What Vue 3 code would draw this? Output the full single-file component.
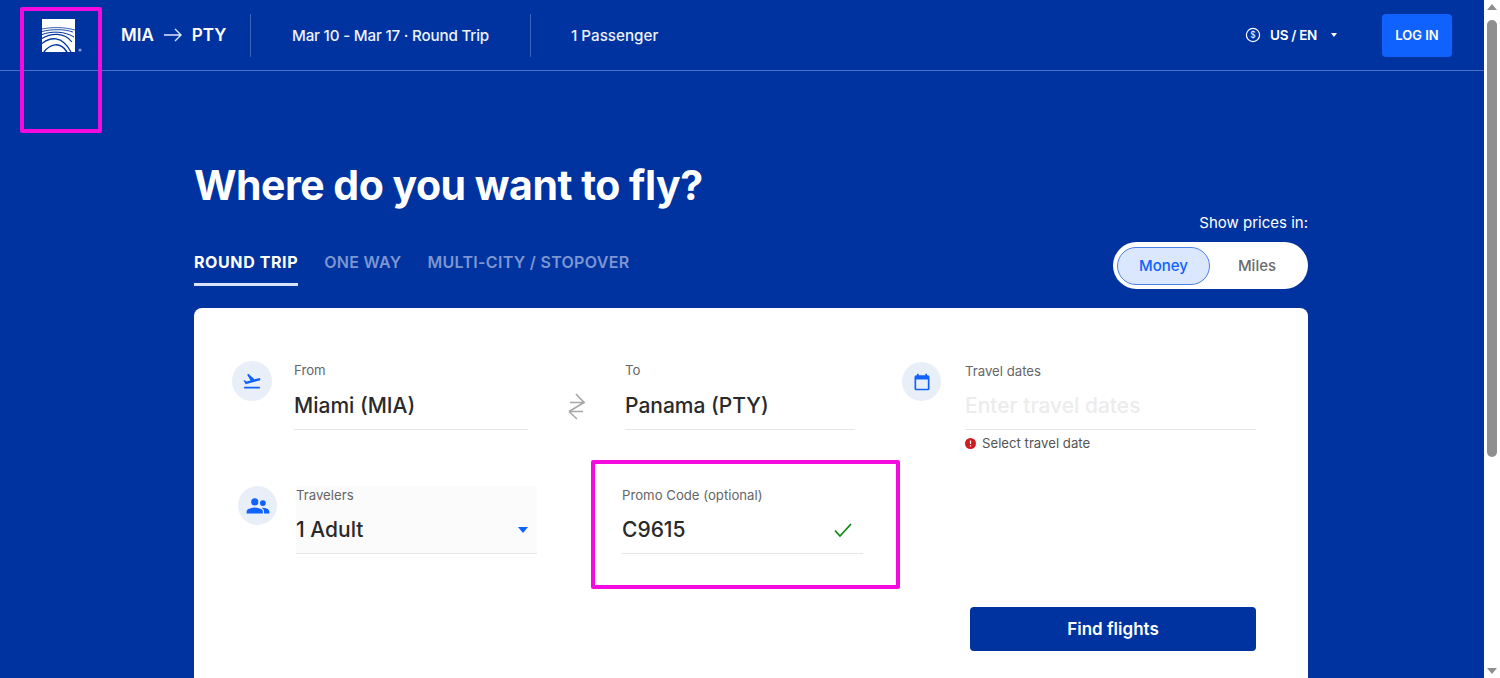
<script setup>
const tabs = [
    {label: 'ROUND TRIP', active: true},
    {label: 'ONE WAY', active: false},
    {label: 'MULTI-CITY / STOPOVER', active: false}
];
</script>

<template>
    <div class="page">
        <div class="main">
            <header class="topbar">
                <div class="logo-cell">
                    <svg class="logo" width="42" height="34" viewBox="0 0 42 34">
                        <rect x="0" y="0" width="33" height="33" fill="#fff"/>
                        <g fill="none" stroke="#0033a0">
                            <path d="M0 10C10 8 22 8 33 11" stroke-width=".8"/>
                            <path d="M0 12.500C10 10 22 10 31 13" stroke-width=".9"/>
                            <path d="M0 15.500C10 12 22 12 32 18" stroke-width="1"/>
                            <path d="M0 19.500C9 14 22 13 30 23" stroke-width="1.200"/>
                            <path d="M0 24.500C8 18 20 16 29 33" stroke-width="1.300"/>
                            <path d="M2 33C8 25 18 22 25 33" stroke-width="1.500"/>
                        </g>
                        <circle cx="38" cy="31" r="1.600" fill="#7f9bd6"/>
                    </svg>
                </div>
                <div class="route">
                    <span>MIA</span>
                    <svg width="18" height="14" viewBox="0 0 18 14" fill="none" stroke="#dfe8fb" stroke-width="1.400">
                        <path d="M0 7H17M11 1l6 6-6 6"/>
                    </svg>
                    <span>PTY</span>
                </div>
                <div class="summary dates">Mar 10 - Mar 17 · Round Trip</div>
                <div class="summary pax">1 Passenger</div>
                <div class="top-right">
                    <svg width="16" height="16" viewBox="0 0 16 16" fill="none" stroke="#fff" stroke-width="1.200">
                        <circle cx="8" cy="8" r="6.600"/>
                        <text x="8" y="11" text-anchor="middle" font-size="8.500" fill="#fff" stroke="none" font-family="Inter, sans-serif">$</text>
                    </svg>
                    <span class="locale">US / EN</span>
                    <span class="caret"></span>
                    <button class="login">LOG IN</button>
                </div>
            </header>

            <section class="content">
                <h1>Where do you want to fly?</h1>
                <div class="tabs-row">
                    <nav class="tabs">
                        <a v-for="tab in tabs" :key="tab.label" class="tab" :class="{active: tab.active}">{{ tab.label }}</a>
                    </nav>
                    <div class="prices">
                        <div class="prices-label">Show prices in:</div>
                        <div class="toggle">
                            <span class="opt on">Money</span>
                            <span class="opt">Miles</span>
                        </div>
                    </div>
                </div>

                <div class="card">
                    <div class="row first">
                        <span class="circle">
                            <svg width="20" height="20" viewBox="0 0 24 24" fill="#0f62fe">
                                <path d="M2.500 19h19v2h-19zM22.070 9.640c-.21-.8-1.040-1.280-1.840-1.060L14.920 10l-6.900-6.430-1.930.51 4.140 7.170-4.970 1.330-1.970-1.540-1.450.39 2.590 4.490c0 0 7.120-1.900 16.570-4.430.81-.23 1.280-1.050 1.070-1.850z"/>
                            </svg>
                        </span>
                        <div class="field from">
                            <label>From</label>
                            <div class="value">Miami (MIA)</div>
                        </div>
                        <div class="swap">
                            <svg width="17" height="27" viewBox="0 0 17 27" fill="none" stroke="#a8a8a8" stroke-width="1.700">
                                <path d="M8 1l8 8.500H2M16 9.500L1 18.500M1 18.500H15M1 18.500L9 26"/>
                            </svg>
                        </div>
                        <div class="field to">
                            <label>To</label>
                            <div class="value">Panama (PTY)</div>
                        </div>
                        <span class="circle cal">
                            <svg width="20" height="20" viewBox="0 0 24 24" fill="#0f62fe">
                                <path d="M19 4h-1V2h-2v2H8V2H6v2H5a2 2 0 0 0-2 2v14a2 2 0 0 0 2 2h14a2 2 0 0 0 2-2V6a2 2 0 0 0-2-2zm0 16H5V9h14v11z"/>
                            </svg>
                        </span>
                        <div class="field dates-field">
                            <label>Travel dates</label>
                            <div class="value placeholder">Enter travel dates</div>
                            <div class="error">
                                <svg width="11" height="11" viewBox="0 0 11 11">
                                    <circle cx="5.500" cy="5.500" r="5.500" fill="#d01c1f"/>
                                    <path d="M5.500 2.500v3.400M5.500 7.200v1.200" stroke="#fff" stroke-width="1.200"/>
                                </svg>
                                <span>Select travel date</span>
                            </div>
                        </div>
                    </div>

                    <div class="row second">
                        <span class="circle">
                            <svg width="26" height="26" viewBox="0 0 24 24" fill="#0f62fe">
                                <path d="M9 11.500a3.300 3.300 0 1 0 0-6.600 3.300 3.300 0 0 0 0 6.600zM16.500 12a2.700 2.700 0 1 0 0-5.400 2.700 2.700 0 0 0 0 5.400zM9 13.300c-2.600 0-7.500 1.200-7.500 3.700v1.900h15V17c0-2.500-4.900-3.700-7.500-3.700zM16.500 13.500c-.3 0-.7 0-1.100.1 1.200.9 2.100 2 2.100 3.400v1.900h5V17.200c0-2.400-3.800-3.700-6-3.700z"/>
                            </svg>
                        </span>
                        <div class="field travelers">
                            <label>Travelers</label>
                            <div class="value">1 Adult<span class="blue-caret"></span></div>
                        </div>
                        <div class="field promo">
                            <label>Promo Code (optional)</label>
                            <div class="value">C9615
                                <svg width="20" height="16" viewBox="0 0 20 16" fill="none" stroke="#0d8a12" stroke-width="1.800">
                                    <path d="M2 8.500l5 5.500L18 2"/>
                                </svg>
                            </div>
                        </div>
                    </div>

                    <div class="actions">
                        <button class="find">Find flights</button>
                    </div>
                </div>
            </section>
        </div>

        <aside class="scrollbar">
            <span class="arrow up"></span>
            <span class="thumb"></span>
            <span class="arrow down"></span>
        </aside>

        <div class="mark mark-logo"></div>
        <div class="mark mark-promo"></div>
    </div>
</template>

<style>
html, body {
    margin: 0;
    overflow: hidden;
}
</style>

<style scoped>
.page {
    position: relative;
    display: flex;
    height: 678px;
    overflow: hidden;
    font-family: Inter, "Liberation Sans", sans-serif;
    color: #fff;
    background: #fff;
}

.main {
    width: 1484px;
    background: #0033a0;
    overflow: hidden;
}

.topbar {
    display: flex;
    align-items: center;
    height: 70px;
    border-bottom: 1px solid #4a70c4;
}

.logo-cell {
    display: flex;
    width: 121px;
    padding: 2px 0 0 42px;
    box-sizing: border-box;
}

.route {
    display: flex;
    align-items: center;
    gap: 10px;
    width: 129px;
    height: 43px;
    font-size: 17px;
    font-weight: 600;
    border-right: 1px solid #3a62bb;
    box-sizing: content-box;
}

.summary {
    display: flex;
    align-items: center;
    height: 43px;
    font-size: 15.200px;
    font-weight: 500;
    color: #eef2fb;
    padding-left: 41px;
    white-space: nowrap;
}

.dates {
    width: 197px;
    padding-right: 41px;
    border-right: 1px solid #3a62bb;
    letter-spacing: -0.2px;
}

.pax {
    padding-left: 40px;
}

.top-right {
    display: flex;
    align-items: center;
    margin-left: auto;
    padding-right: 32px;
}

.locale {
    margin-left: 9px;
    font-size: 13.500px;
    font-weight: 600;
    letter-spacing: -0.3px;
}

.caret {
    width: 0;
    height: 0;
    margin-left: 14px;
    border: 3.500px solid transparent;
    border-top: 4px solid #fff;
    border-bottom: 0;
}

.login {
    width: 70px;
    height: 43px;
    margin-left: 45px;
    border: 0;
    border-radius: 4px;
    background: #0f62fe;
    color: #fff;
    font-family: inherit;
    font-size: 13px;
    font-weight: 600;
}

.content {
    padding-left: 194px;
    width: 1114px;
}

h1 {
    margin: 86px 0 0;
    font-size: 41px;
    line-height: 56px;
    font-weight: 700;
    letter-spacing: -0.5px;
}

.tabs-row {
    display: flex;
    justify-content: space-between;
    align-items: flex-end;
    margin-bottom: 19px;
}

.tabs {
    display: flex;
    gap: 26px;
    margin-bottom: 3px;
}

.tab {
    padding-bottom: 11px;
    font-size: 16px;
    line-height: 20px;
    font-weight: 600;
    letter-spacing: 0.3px;
    color: #7c96d2;
    border-bottom: 3px solid transparent;
}

.tab.active {
    font-weight: 700;
    letter-spacing: 0.6px;
    color: #fff;
    border-bottom-color: #d8e4fb;
}

.prices-label {
    font-size: 15px;
    line-height: 20px;
    text-align: right;
    margin-bottom: 9px;
}

.toggle {
    display: flex;
    align-items: center;
    width: 195px;
    height: 47px;
    padding: 0 4px;
    box-sizing: border-box;
    border-radius: 24px;
    background: #fff;
}

.opt {
    flex: 1;
    font-size: 15px;
    font-weight: 500;
    color: #6b6b6b;
    text-align: center;
}

.opt.on {
    flex: none;
    width: 93px;
    height: 38px;
    line-height: 36px;
    box-sizing: border-box;
    border: 1px solid #4a7fe8;
    border-radius: 19px;
    background: #dbe7fd;
    color: #0f62fe;
}

.card {
    height: 420px;
    padding-top: 54px;
    box-sizing: border-box;
    border-radius: 8px;
    background: #fff;
    color: #222;
}

.row {
    display: flex;
    height: 68px;
}

.first {
    padding-left: 38px;
}

.second {
    margin-top: 56px;
    padding-left: 44px;
}

.circle {
    display: flex;
    flex: none;
    align-items: center;
    justify-content: center;
    width: 39px;
    height: 39px;
    border-radius: 50%;
    background: #e8eff8;
}

.first > .circle:first-child {
    width: 40px;
    height: 40px;
    margin-top: -1px;
}

.field {
    box-sizing: border-box;
    height: 68px;
}

.field label {
    display: block;
    height: 18px;
    font-size: 13.200px;
    line-height: 18px;
    color: #666;
}

.from label,
.to label {
    margin: -1px 0 1px;
}

.value {
    display: flex;
    align-items: center;
    justify-content: space-between;
    height: 50px;
    padding-top: 2px;
    box-sizing: border-box;
    font-size: 21px;
    font-weight: 500;
    color: #2a2a2a;
    border-bottom: 1px solid #e6e6e6;
}

.placeholder {
    color: #ececec;
}

.from {
    width: 234px;
    margin-left: 22px;
}

.swap {
    display: flex;
    justify-content: center;
    width: 97px;
    padding-top: 31px;
    box-sizing: border-box;
}

.to {
    width: 230px;
}

.cal {
    margin-left: 47px;
}

.dates-field {
    width: 291px;
    margin-left: 24px;
}

.error {
    display: flex;
    align-items: center;
    gap: 6px;
    margin-top: 4px;
    font-size: 13.200px;
    line-height: 18px;
    color: #555;
}

.travelers {
    width: 241px;
    margin-left: 19px;
    background: #fbfbfb;
}

.promo {
    width: 241px;
    margin-left: 85px;
}

.promo .value svg {
    margin-right: 10px;
}

.blue-caret {
    width: 0;
    height: 0;
    margin-right: 9px;
    border: 5.500px solid transparent;
    border-top: 6px solid #0f62fe;
    border-bottom: 0;
}

.actions {
    display: flex;
    justify-content: flex-end;
    margin-top: 53px;
    padding-right: 52px;
}

.find {
    width: 286px;
    height: 44px;
    padding-bottom: 2px;
    border: 0;
    border-radius: 4px;
    background: #0033a0;
    color: #fff;
    font-family: inherit;
    font-size: 17px;
    font-weight: 600;
}

.scrollbar {
    position: relative;
    flex: none;
    width: 16px;
    background: #fff;
}

.thumb {
    position: absolute;
    top: 20px;
    left: 3px;
    width: 10px;
    height: 437px;
    border-radius: 5px;
    background: #8f8f8f;
}

.arrow {
    position: absolute;
    left: 3px;
    width: 0;
    height: 0;
    border: 5px solid transparent;
}

.arrow.up {
    top: 4px;
    border-top: 0;
    border-bottom: 6px solid #8f8f8f;
}

.arrow.down {
    bottom: 4px;
    border-bottom: 0;
    border-top: 6px solid #8f8f8f;
}

.mark {
    position: absolute;
    box-sizing: border-box;
    border: 4px solid #f50ae0;
    border-radius: 2px;
}

.mark-logo {
    top: 7px;
    left: 20px;
    width: 82px;
    height: 126px;
}

.mark-promo {
    top: 460px;
    left: 591px;
    width: 309px;
    height: 129px;
}
</style>
